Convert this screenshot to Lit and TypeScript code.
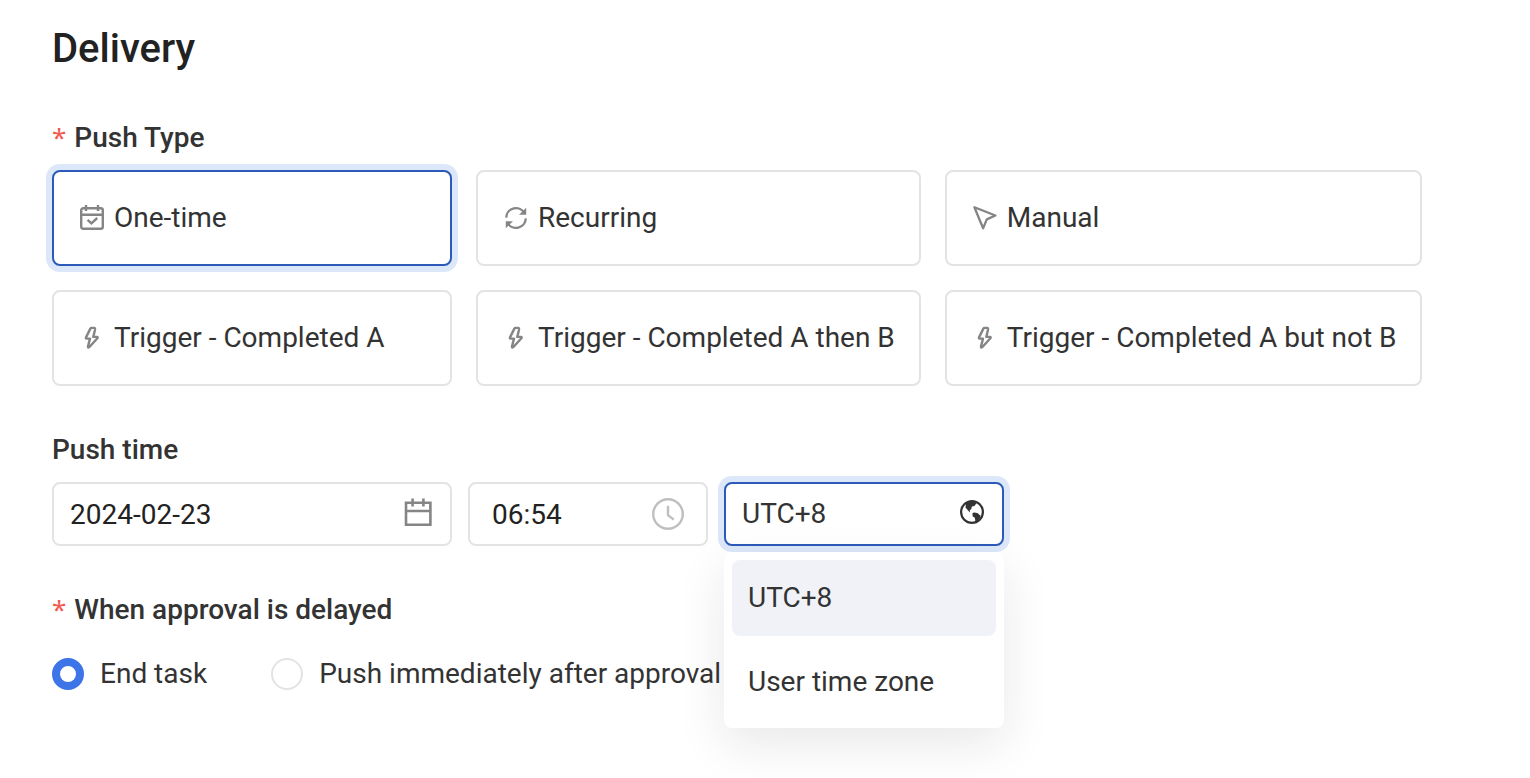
import { LitElement, html, css, svg } from "lit";
import { customElement, state } from "lit/decorators.js";
import { classMap } from "lit/directives/class-map.js";

const glyphs = {
  schedule: svg`<g fill="none" stroke="currentColor" stroke-width="2.4"><rect x="1.2" y="3.2" width="21.6" height="20.6" rx="2"/><path d="M1 9.8h22M6 0v6M18 0v6"/><path d="M7.6 14.8l3.8 3.6 5.8-5.4"/></g>`,
  repeat: svg`<g fill="none" stroke="currentColor" stroke-width="2.3"><path d="M2.2 12.6A9.8 9.8 0 0 1 20.6 8.2M21.8 13.4A9.8 9.8 0 0 1 3.4 17.8"/></g><path fill="currentColor" d="M22.2 2.8v7h-7.2zM1.8 23.2v-7h7.2z"/>`,
  cursor: svg`<path fill="none" stroke="currentColor" stroke-width="2.3" stroke-linejoin="round" d="M1.4 2.2l21 8.3-8.6 3.9-3.7 8.8z"/>`,
  bolt: svg`<path fill="none" stroke="currentColor" stroke-width="2.4" stroke-linejoin="round" d="M10.4 3.6L6 12.4q-.5 1.2.8 1.2H10l-2 7.8q-.2 2 1.2.8l8.2-9q.9-1.3-.6-1.3h-3.5l1.7-7.1q.3-1.8-1-1.9h-2.4q-.9 0-1.2.7z"/>`,
};

const pushTypes: { label: string; icon: keyof typeof glyphs }[] = [
  { label: "One-time", icon: "schedule" },
  { label: "Recurring", icon: "repeat" },
  { label: "Manual", icon: "cursor" },
  { label: "Trigger - Completed A", icon: "bolt" },
  { label: "Trigger - Completed A then B", icon: "bolt" },
  { label: "Trigger - Completed A but not B", icon: "bolt" },
];

const zones = ["UTC+8", "User time zone"];

@customElement("app-root")
export class AppRoot extends LitElement {
  @state() private pushType = "One-time";
  @state() private zone = "UTC+8";
  @state() private menuOpen = true;

  static styles = css`
    :host {
      display: block;
      box-sizing: border-box;
      min-height: 100vh;
      padding: 25px 52px 32px;
      background: #fff;
      color: #333;
      font: 400 28px/40px Roboto, sans-serif;
    }
    * {
      box-sizing: border-box;
    }
    h1 {
      margin: 0 0 45px;
      color: #222;
      font-size: 40px;
      font-weight: 500;
      line-height: 48px;
    }
    .label {
      display: flex;
      align-items: baseline;
      gap: 8px;
      margin: 0 0 12px;
      padding: 0;
      font-size: 28px;
      font-weight: 500;
      line-height: 40px;
    }
    .required {
      color: #f2564d;
      font-family: "Noto Sans", sans-serif;
      font-size: 26px;
      font-weight: 400;
      line-height: 32px;
    }
    .group {
      margin-bottom: 44px;
    }
    fieldset {
      margin: 0;
      padding: 0;
      border: 0;
      min-width: 0;
    }
    .cards {
      display: grid;
      grid-template-columns: minmax(400px, max-content) max-content max-content;
      gap: 24px;
    }
    .card {
      display: flex;
      align-items: center;
      gap: 10px;
      height: 96px;
      padding: 0 24px 0 26px;
      border: 2px solid #e3e3e3;
      border-radius: 8px;
      background: #fff;
      color: #333;
      font: inherit;
      white-space: nowrap;
      cursor: pointer;
    }
    .icon {
      flex: none;
      width: 24px;
      height: 26px;
      color: #858585;
    }
    .selected {
      border-color: #2b5ab8;
      box-shadow: 0 0 0 6px #dce8f9;
    }
    .fields {
      display: flex;
      gap: 16px;
    }
    .field {
      position: relative;
      width: 280px;
    }
    .date {
      width: 400px;
    }
    .time {
      width: 240px;
    }
    .field input,
    .field select {
      display: block;
      width: 100%;
      height: 64px;
      padding: 0 64px 0 16px;
      border: 2px solid #e3e3e3;
      border-radius: 8px;
      outline: none;
      appearance: none;
      background: #fff;
      color: #222;
      font: inherit;
    }
    .field.time input {
      padding-left: 22px;
    }
    .field.zone select {
      border-color: #2b5ab8;
      box-shadow: 0 0 0 6px #dce8f9;
      color: #333;
    }
    .adorn {
      position: absolute;
      top: 16px;
      right: 16px;
      width: 32px;
      height: 32px;
      color: #333;
      pointer-events: none;
    }
    .date .adorn {
      right: 18px;
      color: #858585;
    }
    .time .adorn {
      right: 24px;
      color: #bfbfbf;
    }
    .menu {
      position: absolute;
      z-index: 1;
      top: 100%;
      left: 0;
      width: 100%;
      display: grid;
      gap: 8px;
      margin: 6px 0 0;
      padding: 8px;
      border-radius: 8px;
      background: #fff;
      box-shadow: 0 16px 48px rgba(34, 34, 44, 0.1);
      list-style: none;
    }
    .option {
      padding: 18px 16px;
      border-radius: 8px;
      cursor: pointer;
    }
    .current {
      background: #f1f2f8;
    }
    .radios {
      display: flex;
      gap: 64px;
      padding-top: 12px;
    }
    .radio {
      display: flex;
      align-items: center;
      gap: 16px;
      white-space: nowrap;
    }
    .radio input {
      appearance: none;
      flex: none;
      width: 32px;
      height: 32px;
      margin: 0;
      border: 2px solid #e3e3e3;
      border-radius: 50%;
      background: #fff;
    }
    .radio input:checked {
      border: 8px solid #3d74e8;
    }
  `;

  private pickZone(zone: string) {
    this.zone = zone;
    this.menuOpen = false;
  }

  render() {
    return html`
      <main>
        <h1>Delivery</h1>
        <section class="group">
          <h2 class="label"><span class="required">*</span>Push Type</h2>
          <div class="cards">
            ${pushTypes.map(
              ({ label, icon }) => html`<button
                type="button"
                class=${classMap({ card: true, selected: label === this.pushType })}
                aria-pressed=${label === this.pushType}
                @click=${() => (this.pushType = label)}
              >
                <svg class="icon" viewBox="0 0 24 26" aria-hidden="true">${glyphs[icon]}</svg>${label}
              </button>`
            )}
          </div>
        </section>

        <section class="group">
          <label class="label" for="date">Push time</label>
          <div class="fields">
            <div class="field date">
              <input id="date" type="text" value="2024-02-23" />
              <svg class="adorn" viewBox="0 0 32 32" fill="none" stroke="currentColor" stroke-width="2.6" aria-hidden="true">
                <path d="M4 4.8h24.4v22H4zM4 13h24.4M10.6 .6v7.8M21.4 .6v7.8" />
              </svg>
            </div>
            <div class="field time">
              <input type="text" value="06:54" aria-label="Time" />
              <svg class="adorn" viewBox="0 0 32 32" fill="none" stroke="currentColor" stroke-width="2.4" aria-hidden="true">
                <circle cx="16" cy="16" r="14.8" />
                <path d="M16 7.8v9.4l5.8 4.4" />
              </svg>
            </div>
            <div class="field zone">
              <select
                aria-label="Time zone"
                .value=${this.zone}
                @mousedown=${(e: Event) => {
                  e.preventDefault();
                  this.menuOpen = !this.menuOpen;
                }}
              >
                ${zones.map((z) => html`<option ?selected=${z === this.zone}>${z}</option>`)}
              </select>
              <svg class="adorn" viewBox="0 0 32 32" aria-hidden="true">
                <circle cx="16" cy="14" r="10.9" fill="none" stroke="currentColor" stroke-width="2.2" />
                <path
                  fill="currentColor"
                  d="M10 5.2C13 2.6 18 2.6 20.6 4.4L19.4 6.8q-.5 1.4-2 1.5l-1.6.3-.4 2.1q-.3 1.1-1.6 1.2l.1 2.5L9.5 9.6zM16.4 15.4q.8-1 2-.9l2.6.4q1.4.3 2 1.5l1.7 1.3q-1.2 4.3-5.3 6.7l-.4-3.8q-.2-1.2-1.3-1.6l-1-.5z"
                />
              </svg>
              ${this.menuOpen
                ? html`<ul class="menu" role="listbox" aria-label="Time zone">
                    ${zones.map(
                      (z) => html`<li
                        role="option"
                        aria-selected=${z === this.zone}
                        class=${classMap({ option: true, current: z === this.zone })}
                        @click=${() => this.pickZone(z)}
                      >${z}</li>`
                    )}
                  </ul>`
                : null}
            </div>
          </div>
        </section>

        <fieldset>
          <legend class="label"><span class="required">*</span>When approval is delayed</legend>
          <div class="radios">
            <label class="radio"><input type="radio" name="delayed" checked />End task</label>
            <label class="radio"><input type="radio" name="delayed" />Push immediately after approval</label>
          </div>
        </fieldset>
      </main>
    `;
  }
}
